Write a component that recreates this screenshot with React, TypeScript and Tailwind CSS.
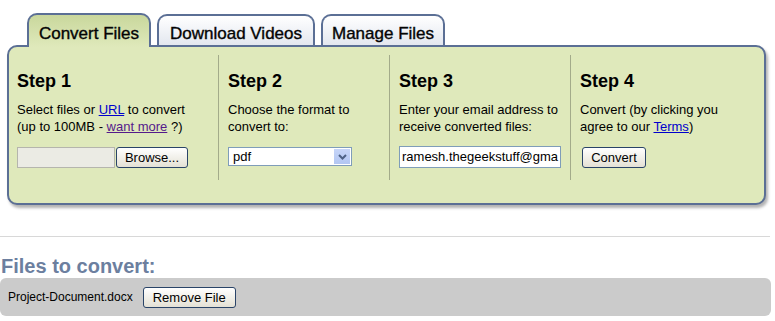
import * as React from "react";

function XpButton({ children, className = "" }: { children: React.ReactNode; className?: string }) {
  return (
    <button
      className={`flex items-center justify-center rounded-[3px] border border-[#2a4468] bg-gradient-to-b from-white to-[#e4e1d5] text-[13px] leading-none text-black ${className}`}
    >
      {children}
    </button>
  );
}

export default function App() {
  return (
    <div className="relative h-[321px] w-[775px] overflow-hidden bg-white font-['Liberation_Sans',Arial,sans-serif] text-black">
      {/* tabs */}
      <div className="flex h-[32px] items-end gap-[6px] pl-[27px] mt-[13px]">
        <div className="relative z-10 -mb-[2px] flex h-[34px] w-[124px] justify-center rounded-t-[10px] border-2 border-b-0 border-[#5b6f95] bg-gradient-to-b from-[#c9d79c] to-[#dfe9bb] pt-[9px] text-[17px] leading-[20px] [-webkit-text-stroke:0.4px_#111]">
          Convert Files
        </div>
        <div className="flex h-[31px] w-[158px] justify-center rounded-t-[10px] border-2 border-b-0 border-[#5b6f95] bg-gradient-to-b from-white to-[#e3e7ef] pt-[8px] text-[17px] leading-[20px] [-webkit-text-stroke:0.4px_#111]">
          Download Videos
        </div>
        <div className="flex h-[31px] w-[124px] justify-center rounded-t-[10px] border-2 border-b-0 border-[#5b6f95] bg-gradient-to-b from-white to-[#e3e7ef] pt-[8px] text-[17px] leading-[20px] [-webkit-text-stroke:0.4px_#111]">
          Manage Files
        </div>
      </div>

      {/* panel */}
      <div className="ml-[7px] flex h-[160px] w-[759px] rounded-[10px] border-2 border-[#5b6f95] bg-[#dfe9bb] pt-[8px] pb-[23px] shadow-[2px_3px_3px_rgba(0,0,0,0.3)]">
        <div className="w-[209px] pl-[8px] pt-[15px]">
          <h2 className="text-[18px] font-bold leading-[22px]">Step 1</h2>
          <p className="mt-[9px] text-[13px] leading-[17px]">
            Select files or <span className="text-[#0000cc] underline">URL</span> to convert
            <br />
            (up to 100MB - <span className="text-[#551a8b] underline">want more</span> ?)
          </p>
          <div className="mt-[12px] flex h-[21px] items-stretch">
            <div className="w-[98px] border border-[#b5b5ad] bg-[#ebebe4]" />
            <XpButton className="ml-px w-[72px]">Browse...</XpButton>
          </div>
        </div>

        <div className="w-[171px] border-l border-[#a3ab8a] pl-[9px] pt-[15px]">
          <h2 className="text-[18px] font-bold leading-[22px]">Step 2</h2>
          <p className="mt-[9px] text-[13px] leading-[17px]">
            Choose the format to
            <br />
            convert to:
          </p>
          <div className="mt-[12px] flex h-[19px] w-[124px] items-stretch border border-[#7f9db9] bg-white p-px">
            <span className="flex-1 pl-[3px] text-[13px] leading-[16px]">pdf</span>
            <span className="flex w-[16px] items-center justify-center bg-gradient-to-b from-[#c6d5f8] to-[#b2c6f2]">
              <svg width="9" height="6" viewBox="0 0 9 6">
                <path d="M1 1 L4.5 4.5 L8 1" fill="none" stroke="#4d6185" strokeWidth="2" />
              </svg>
            </span>
          </div>
        </div>

        <div className="w-[181px] border-l border-[#a3ab8a] pl-[9px] pt-[15px]">
          <h2 className="text-[18px] font-bold leading-[22px]">Step 3</h2>
          <p className="mt-[9px] text-[13px] leading-[17px]">
            Enter your email address to
            <br />
            receive converted files:
          </p>
          <div className="mt-[11px] flex h-[22px] w-[162px] items-center whitespace-nowrap border border-[#7f9db9] bg-white pl-[2px] text-[13px]">
            ramesh.thegeekstuff@gma
          </div>
        </div>

        <div className="flex-1 border-l border-[#a3ab8a] pl-[9px] pt-[15px]">
          <h2 className="text-[18px] font-bold leading-[22px]">Step 4</h2>
          <p className="mt-[9px] text-[13px] leading-[17px]">
            Convert (by clicking you
            <br />
            agree to our <span className="text-[#0000cc] underline">Terms</span>)
          </p>
          <div className="mt-[12px] flex">
            <XpButton className="ml-[2px] h-[21px] w-[64px]">Convert</XpButton>
          </div>
        </div>
      </div>

      <div className="mt-[31px] h-px w-[770px] bg-[#d8d8d8]" />

      <h3 className="mt-[17px] pl-px text-[20px] font-bold leading-[24px] text-[#6c7f9f]">Files to convert:</h3>
      <div className="flex h-[38px] w-[771px] items-center rounded-[6px] bg-[#cbcbcb] pl-[8px]">
        <span className="text-[12px]">Project-Document.docx</span>
        <XpButton className="ml-[10px] h-[21px] w-[93px]">Remove File</XpButton>
      </div>
    </div>
  );
}
